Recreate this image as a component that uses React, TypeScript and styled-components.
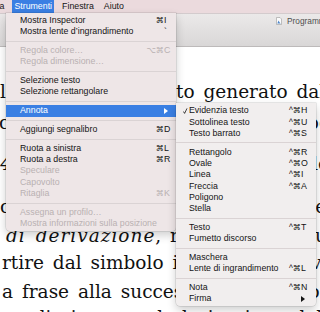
import React from "react";
import styled, { createGlobalStyle } from "styled-components";

const GlobalStyle = createGlobalStyle`
  html, body { margin: 0; padding: 0; background: #fff; }
  body { width: 320px; height: 312px; overflow: hidden; }
  * { box-sizing: border-box; }
`;

const Screen = styled.div`
  position: relative;
  width: 320px;
  height: 312px;
  overflow: hidden;
  background: #fff;
  font-family: "Liberation Sans", "DejaVu Sans", Arial, sans-serif;
`;

const MenuBar = styled.div`
  display: flex;
  height: 13px;
  background: #ebdadd;
  font-size: 8.8px;
  line-height: 13px;
  color: #151515;
  white-space: nowrap;
`;

const MenuTitle = styled.div<{ $active?: boolean; $offset?: number }>`
  padding: 0 2px;
  margin-right: 6px;
  margin-left: ${(p) => p.$offset ?? 0}px;
  background: ${(p) => (p.$active ? "#3a7fe3" : "transparent")};
  color: ${(p) => (p.$active ? "#fff" : "#151515")};
`;

const Toolbar = styled.div`
  height: 34px;
  display: flex;
  align-items: flex-start;
  padding: 3px 0 0 276px;
  background: linear-gradient(#ebe9e9, #d9d7d7);
  border-top: 1px solid #d3cbcd;
  border-bottom: 1px solid #bdbaba;
`;

const Title = styled.div`
  display: flex;
  align-items: center;
  gap: 5px;
  height: 8px;
  font-size: 8.3px;
  color: #4f4f4f;
  white-space: nowrap;
`;

const Document = styled.div`
  padding-top: 30.5px;
  font-family: "DejaVu Serif", serif;
  font-size: 18.5px;
  color: #111;
`;

const Line = styled.div<{ $mt: number }>`
  display: grid;
  grid-template-columns: 176px 1fr;
  height: 27px;
  line-height: 27px;
  margin-top: ${(p) => p.$mt}px;
  white-space: nowrap;
`;

const Cell = styled.div<{ $indent?: number }>`
  overflow: hidden;
  text-indent: ${(p) => p.$indent ?? 0}px;
  word-spacing: 3px;
`;

const Emph = styled.i`
  letter-spacing: 1px;
`;

const Menu = styled.div<{ $top: number; $left: number; $width: number; $bg: string }>`
  position: absolute;
  top: ${(p) => p.$top}px;
  left: ${(p) => p.$left}px;
  width: ${(p) => p.$width}px;
  padding: 2px 0 1.5px;
  background: ${(p) => p.$bg};
  border-radius: 0 0 4px 4px;
  box-shadow: 0 0 0 0.5px rgba(0, 0, 0, 0.16), 0 4px 10px rgba(0, 0, 0, 0.2);
  font-size: 8.8px;
  white-space: nowrap;
`;

const Item = styled.div<{ $active?: boolean; $disabled?: boolean; $lead: number; $trail: number }>`
  display: grid;
  grid-template-columns: ${(p) => p.$lead}px 1fr auto;
  align-items: center;
  height: 11.3px;
  line-height: 11.3px;
  padding-right: ${(p) => p.$trail}px;
  background: ${(p) => (p.$active ? "#3a7fe3" : "transparent")};
  color: ${(p) => (p.$active ? "#fff" : p.$disabled ? "#b9b1b2" : "#141414")};
`;

const Lead = styled.span`
  display: flex;
  align-items: center;
  padding-left: 7px;
`;

const Shortcut = styled.span`
  display: flex;
  align-items: center;
`;

const Mods = styled.span`
  text-align: right;
  font-size: 8.2px;
`;

const Key = styled.span`
  width: 9px;
  display: flex;
  align-items: center;
`;

const Separator = styled.div`
  height: 7.5px;
  display: flex;
  align-items: center;
  &::after {
    content: "";
    flex: 1;
    height: 1px;
    background: #dad3d4;
  }
`;

type Entry =
  | {
      label: string;
      mods?: string;
      key?: string;
      disabled?: boolean;
      active?: boolean;
      submenu?: boolean;
      checked?: boolean;
    }
  | "sep";

const toolsMenu: Entry[] = [
  { label: "Mostra Inspector", mods: "⌘", key: "I" },
  { label: "Mostra lente d’ingrandimento", key: "`" },
  "sep",
  { label: "Regola colore…", mods: "⌥⌘", key: "C", disabled: true },
  { label: "Regola dimensione…", disabled: true },
  "sep",
  { label: "Selezione testo" },
  { label: "Selezione rettangolare" },
  "sep",
  { label: "Annota", active: true, submenu: true },
  "sep",
  { label: "Aggiungi segnalibro", mods: "⌘", key: "D" },
  "sep",
  { label: "Ruota a sinistra", mods: "⌘", key: "L" },
  { label: "Ruota a destra", mods: "⌘", key: "R" },
  { label: "Speculare", disabled: true },
  { label: "Capovolto", disabled: true },
  { label: "Ritaglia", mods: "⌘", key: "K", disabled: true },
  "sep",
  { label: "Assegna un profilo…", disabled: true },
  { label: "Mostra informazioni sulla posizione", disabled: true },
];

const annotateMenu: Entry[] = [
  { label: "Evidenzia testo", mods: "^⌘", key: "H", checked: true },
  { label: "Sottolinea testo", mods: "^⌘", key: "U" },
  { label: "Testo barrato", mods: "^⌘", key: "S" },
  "sep",
  { label: "Rettangolo", mods: "^⌘", key: "R" },
  { label: "Ovale", mods: "^⌘", key: "O" },
  { label: "Linea", mods: "^⌘", key: "I" },
  { label: "Freccia", mods: "^⌘", key: "A" },
  { label: "Poligono" },
  { label: "Stella" },
  "sep",
  { label: "Testo", mods: "^⌘", key: "T" },
  { label: "Fumetto discorso" },
  "sep",
  { label: "Maschera" },
  { label: "Lente di ingrandimento", mods: "^⌘", key: "L" },
  "sep",
  { label: "Nota", mods: "^⌘", key: "N" },
  { label: "Firma", submenu: true },
];

const Arrow = () => (
  <svg width="4" height="6" viewBox="0 0 4 6">
    <path d="M0 0 L4 3 L0 6 Z" fill="currentColor" />
  </svg>
);

const Check = () => (
  <svg width="4.5" height="6" viewBox="0 0 4.5 6">
    <path d="M0.4 3.5 L1.6 5.4 L4 0.4" fill="none" stroke="#141414" strokeWidth="0.8" />
  </svg>
);

const DocIcon = () => (
  <svg width="6" height="8" viewBox="0 0 6 8">
    <path d="M0.5 0.5 H4 L5.5 2 V7.5 H0.5 Z" fill="#fbfbfb" stroke="#9a9a9a" strokeWidth="0.6" />
    <path d="M1.3 6.6 L2.6 3.6 L3.5 5.2 L4.7 6.6 Z" fill="#4f86c9" />
  </svg>
);

const MenuList = ({ entries, lead, trail, withChecks }: { entries: Entry[]; lead: number; trail: number; withChecks?: boolean }) => (
  <>
    {entries.map((e, i) =>
      e === "sep" ? (
        <Separator key={i} />
      ) : (
        <Item key={i} $active={e.active} $disabled={e.disabled} $lead={lead} $trail={trail}>
          <Lead>{withChecks && e.checked ? <Check /> : null}</Lead>
          <span>{e.label}</span>
          <Shortcut>
            {e.mods ? <Mods>{e.mods}</Mods> : null}
            <Key>{e.submenu ? <Arrow /> : e.key ?? ""}</Key>
          </Shortcut>
        </Item>
      )
    )}
  </>
);

export default function App() {
  return (
    <Screen>
      <GlobalStyle />
      <MenuBar>
        <MenuTitle $offset={-17}>Vista</MenuTitle>
        <MenuTitle $active>Strumenti</MenuTitle>
        <MenuTitle>Finestra</MenuTitle>
        <MenuTitle>Aiuto</MenuTitle>
      </MenuBar>
      <Toolbar>
        <Title>
          <DocIcon />
          <span>Programmazione.pdf</span>
        </Title>
      </Toolbar>
      <Document>
        <Line $mt={0}>
          <Cell>l</Cell>
          <Cell>to generato dal</Cell>
        </Line>
        <Line $mt={4.5}>
          <Cell $indent={-1}>c</Cell>
          <Cell>un nuovo simbolo non term.</Cell>
        </Line>
        <Line $mt={14}>
          <Cell>
            <b>
              <i>4</i>
            </b>
          </Cell>
          <Cell>Il linguaggio delle fI</Cell>
        </Line>
        <Line $mt={16}>
          <Cell>o</Cell>
          <Cell>Definiamo la regola dI</Cell>
        </Line>
        <Line $mt={2}>
          <Cell $indent={6}>
            <Emph>di derivazione</Emph>, regola
          </Cell>
          <Cell>regola di produzione a</Cell>
        </Line>
        <Line $mt={-0.5}>
          <Cell $indent={2}>rtire dal simbolo iniziale</Cell>
          <Cell>iniziale si arriva in fi</Cell>
        </Line>
        <Line $mt={2.5}>
          <Cell $indent={2}>a frase alla successiva</Cell>
          <Cell>successiva fino all’ulti</Cell>
        </Line>
        <Line $mt={-1.5}>
          <Cell $indent={2}>ne di ciascuna derivazione</Cell>
          <Cell>derivazione della lingua</Cell>
        </Line>
      </Document>

      <Menu $top={13} $left={6} $width={170} $bg="#eee6e7">
        <MenuList entries={toolsMenu} lead={14} trail={3} />
      </Menu>
      <Menu $top={103.3} $left={176} $width={140} $bg="#f1eeee">
        <MenuList entries={annotateMenu} lead={13} trail={6} withChecks />
      </Menu>
    </Screen>
  );
}
